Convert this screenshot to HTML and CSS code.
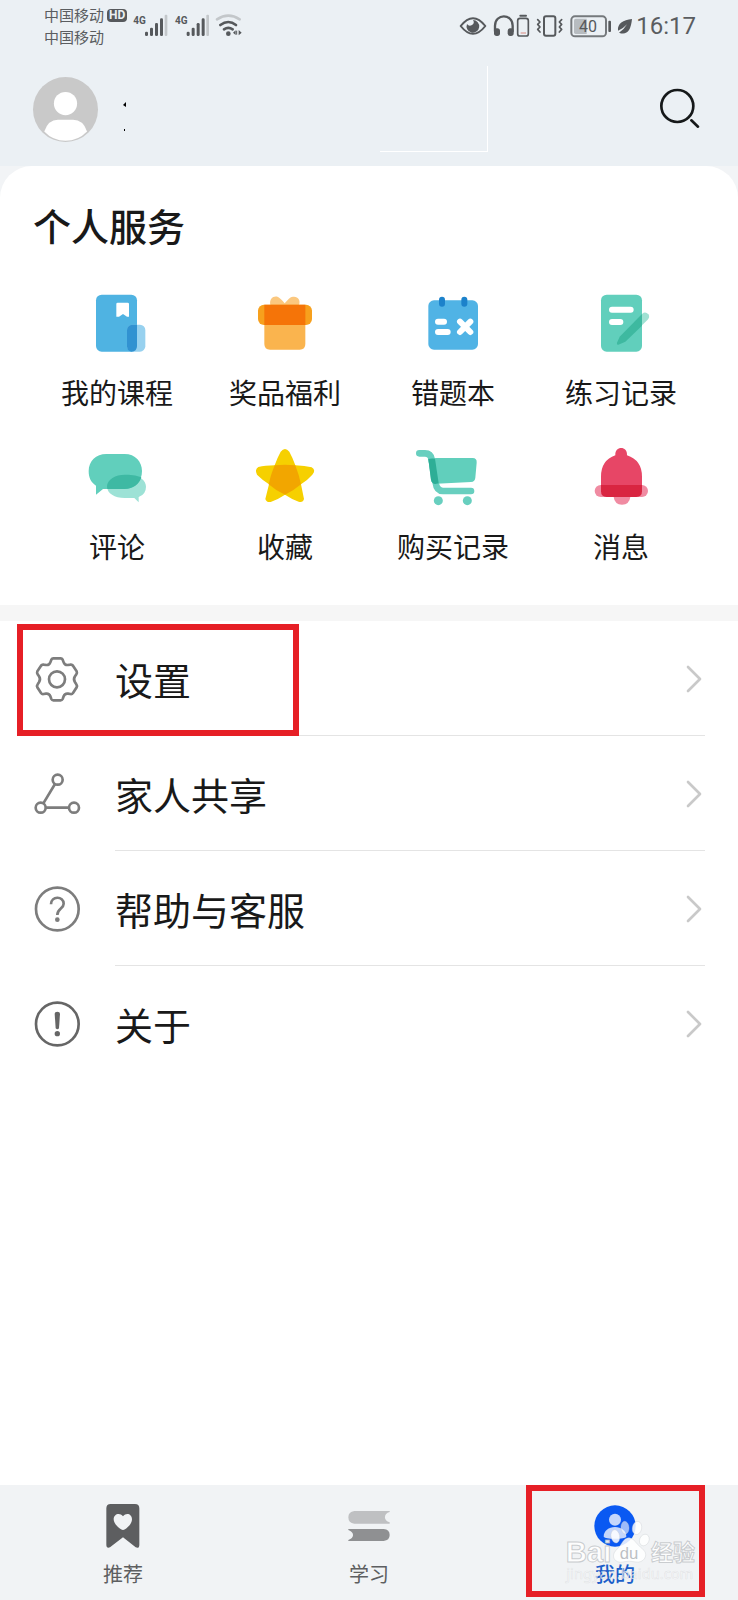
FILE: index.html
```html
<!DOCTYPE html>
<html lang="zh-CN">
<head>
<meta charset="utf-8">
<meta name="viewport" content="width=device-width, initial-scale=1">
<title>我的</title>
<link rel="stylesheet" href="styles.css">
</head>
<body>
<div class="page">
  <header class="header">
    <div class="status">
      <div class="carriers">
        <div class="carrier"><span>中国移动</span><span class="hd">HD</span></div>
        <div class="carrier"><span>中国移动</span></div>
      </div>
      <svg class="signals" viewBox="399 42 330 72" aria-hidden="true">
        <g fill="#56595c">
          <text class="net" x="400" y="73">4G</text>
          <text class="net" x="525" y="73">4G</text>
          <g id="bars">
            <rect x="435" y="95" width="9" height="13" rx="4"/>
            <rect x="450" y="83" width="9" height="25" rx="4"/>
            <rect x="465" y="69" width="9" height="39" rx="4"/>
            <rect x="480" y="55" width="9" height="53" rx="4"/>
            <rect x="494" y="44" width="8" height="64" rx="3" fill="#c3c7ca"/>
          </g>
          <use href="#bars" x="125"/>
          <circle cx="685" cy="101" r="7"/>
          <path d="M699 98l8-7v14zM725 98l-9-8v16z"/>
          <path d="M710 92v12" stroke="#56595c" stroke-width="3"/>
        </g>
        <g fill="none" stroke="#56595c" stroke-width="8" stroke-linecap="round">
          <path d="M651 58Q685 36 719 58" stroke="#c3c7ca"/>
          <path d="M661 75Q685 57 708 75"/>
          <path d="M672 88Q685 79 698 88"/>
        </g>
      </svg>
      <svg class="indicators" viewBox="60 40 528 72" aria-hidden="true">
        <g fill="none" stroke="#56595c" stroke-width="6" stroke-linecap="round" stroke-linejoin="round">
          <path d="M68 76Q105 29 142 76Q105 123 68 76Z"/>
          <path d="M171 92V75C171 38 224 38 224 75V92" stroke-width="7"/>
          <rect x="239" y="53" width="32" height="53" rx="7" stroke-width="5"/>
          <path d="M247 45h17"/>
          <rect x="318" y="47" width="34" height="58" rx="6"/>
          <path d="M299 57l7 7-7 7 7 8-7 7 7 8M371 57l-7 7 7 7-7 8 7 7-7 8" stroke-width="5"/>
          <rect x="400" y="47" width="104" height="60" rx="11" stroke="#75797c"/>
        </g>
        <path d="M248 97h16" stroke="#d98a80" stroke-width="3"/>
        <g fill="#56595c">
          <path d="M105 58a19 19 0 1 1-18 12a10 10 0 0 0 18-12Z"/>
          <rect x="168" y="83" width="18" height="23" rx="8"/>
          <rect x="209" y="83" width="18" height="23" rx="8"/>
          <rect x="511" y="60" width="8" height="34" rx="3"/>
          <path d="M582 55C555 58 538 68 540 90Q557 83 567 71Q558 87 543 96Q577 109 582 55Z"/>
        </g>
        <path d="M413 54h33v46h-33q-5 0-5-5V59q0-5 5-5Z" fill="#b7bcc0"/>
        <text class="battery" x="450" y="95" text-anchor="middle">40</text>
      </svg>
      <time class="clock">16:17</time>
    </div>
    <div class="profile">
      <svg class="avatar" viewBox="0 0 196 196" role="img" aria-label="头像">
        <circle cx="98" cy="98" r="98" fill="#c9c9c9"/>
        <circle cx="98" cy="80" r="35" fill="#fff"/>
        <path d="M34 164Q46 129 75 129H121Q151 129 163 164Q136 192 98 192T34 164Z" fill="#fff"/>
      </svg>
      <svg class="marks" viewBox="0 0 12 36" aria-hidden="true"><path d="M3 6l3-3v5z"/><path d="M4 30h1v2H4z"/></svg>
      <span class="patch"></span>
      <button class="search" type="button" aria-label="搜索">
        <svg viewBox="651 253 144 144" fill="none" stroke="#16191a" stroke-width="8" stroke-linecap="round"><circle cx="718" cy="316" r="48"/><path d="M760 359l20 19"/></svg>
      </button>
    </div>
  </header>

  <main class="main">
    <section class="services">
      <h1 class="title">个人服务</h1>
      <div class="grid">
        <a class="service" href="#">
          <svg viewBox="261 400 180 180" aria-hidden="true"><rect x="288" y="405" width="123" height="171" rx="17" fill="#4fb3e2"/><rect x="381" y="495" width="55" height="81" rx="16" fill="#97d1ef"/><path d="M397 495H411V559Q411 576 394 576Q381 574 381 560V511Q381 497 397 495Z" fill="#3192d1"/><path d="M353 429H383Q387 429 387 433V471H381L369 463L357 471H349V433Q349 429 353 429Z" fill="#fff"/></svg>
          <span>我的课程</span>
        </a>
        <a class="service" href="#">
          <svg viewBox="765 400 180 180" aria-hidden="true"><path d="M811 436C807 417 821 407 834 412Q840 414 854 431Q869 413 875 412C892 407 903 420 897 436Z" fill="#fbc87f"/><rect x="774" y="435" width="162" height="61" rx="18" fill="#f7a01d"/><path d="M793 496H916V553Q916 570 899 570H810Q793 570 793 553Z" fill="#fab44e"/><path d="M793 435H916V496H793Z" fill="#f57408"/></svg>
          <span>奖品福利</span>
        </a>
        <a class="service" href="#">
          <svg viewBox="165 70 180 180" aria-hidden="true"><rect x="181" y="92" width="149" height="148" rx="17" fill="#50b3e5"/><g fill="#1c82cb"><rect x="213" y="81" width="18" height="30" rx="9"/><rect x="280" y="81" width="18" height="30" rx="9"/></g><path d="M210 156H228M210 187H239M276 156L307 187M307 156L276 187" fill="none" stroke="#fff" stroke-width="18" stroke-linecap="round"/></svg>
          <span>错题本</span>
        </a>
        <a class="service" href="#">
          <svg viewBox="669 70 180 180" aria-hidden="true"><path d="M822 133Q832 124 841 134Q847 142 839 150L822 167Z" fill="#a0e1d3"/><rect x="699" y="75" width="123" height="171" rx="17" fill="#61cfbc"/><path d="M822 133V168L772 216L751 225Q745 226 747 219L755 201Z" fill="#3eb9a0"/><path d="M732 120H788M732 157H757" stroke="#fff" stroke-width="18" stroke-linecap="round"/></svg>
          <span>练习记录</span>
        </a>
        <a class="service" href="#">
          <svg viewBox="261 51 180 180" aria-hidden="true"><path d="M374 134H386C419 134 438 151 438 170Q438 193 416 201V217L403 204H374C344 204 321 191 321 169S344 134 374 134Z" fill="#9de2d6"/><path d="M319 72H374C406 72 426 95 426 123C426 154 405 177 373 177H309L288 194V167C272 156 266 143 266 123C266 94 288 72 319 72Z" fill="#61cfbc"/><path d="M374 134H386Q406 134 424 142C418 163 399 177 373 177H322Q321 173 321 169C321 148 347 134 374 134Z" fill="#3eb9a3"/></svg>
          <span>评论</span>
        </a>
        <a class="service" href="#">
          <svg viewBox="765 51 180 180" aria-hidden="true"><path d="M842 65Q855 49 868 65Q878 83 886 106Q915 107 935 112Q949 121 937 134Q925 148 903 163L912 207Q909 219 896 215Q874 207 855 194Q836 207 812 216Q799 218 796 207L807 163Q786 149 771 134Q763 119 775 111Q795 106 824 106Q832 83 842 65Z" fill="#f6d000"/><path d="M824 106Q855 103 886 106Q898 137 903 163Q880 183 855 194Q827 182 806 163Q812 134 824 106Z" fill="#f2a600"/></svg>
          <span>收藏</span>
        </a>
        <a class="service" href="#">
          <svg viewBox="165 51 180 180" aria-hidden="true"><path d="M154 70H171Q188 70 191 88L203 158Q206 183 225 183H309" fill="none" stroke="#68cfbf" stroke-width="20" stroke-linecap="round"/><path d="M181 87Q194 84 206 84H314Q327 84 326 98L322 143Q321 155 309 156L205 161Q191 162 189 149Z" fill="#61cfbc"/><path d="M181 87Q190 84 201 86L212 160L202 162Q191 161 189 149Z" fill="#2eae96"/><circle cx="211" cy="212" r="13.500" fill="#68cfbf"/><circle cx="298" cy="212" r="13.500" fill="#68cfbf"/></svg>
          <span>购买记录</span>
        </a>
        <a class="service" href="#">
          <svg viewBox="669 51 180 180" aria-hidden="true"><rect x="680" y="165" width="160" height="36" rx="18" fill="#f08ba2"/><path d="M737 201H787Q784 224 762 224T737 201Z" fill="#f08ba2"/><path d="M742 76C740 47 779 47 777 76Q822 91 822 140V165H699V140Q699 91 742 76Z" fill="#e74666"/><path d="M699 165H822V184Q822 201 805 201H716Q699 201 699 184Z" fill="#d92541"/></svg>
          <span>消息</span>
        </a>
      </div>
    </section>

    <nav class="menu" aria-label="更多">
      <a class="row" href="#">
        <svg class="row-icon" viewBox="99 164 144 144" aria-hidden="true"><path d="M160 174H182Q186 174 188 178L191 186Q194 195 204 194L211 193Q216 192 219 196L230 213Q232 218 229 222L225 228Q219 237 225 246L229 252Q232 256 230 261L219 278Q216 282 211 281L204 280Q194 279 191 288L188 296Q186 300 182 300H160Q156 300 154 296L151 288Q148 279 138 280L131 281Q126 282 123 278L112 261Q110 256 113 252L117 246Q123 237 117 228L113 222Q110 218 112 213L123 196Q126 192 131 193L138 194Q148 195 151 186L154 178Q156 174 160 174Z"/><circle cx="171" cy="237" r="24"/></svg>
        <span class="row-body"><span>设置</span><svg class="chevron" viewBox="258 165 48 84" aria-hidden="true"><path d="M264 171L300 207L264 243"/></svg></span>
      </a>
      <a class="row" href="#">
        <svg class="row-icon" viewBox="99 509 144 144" aria-hidden="true"><circle cx="173" cy="538" r="15"/><circle cx="122" cy="622" r="15"/><circle cx="222" cy="622" r="15"/><path d="M165 551L130 609M137 622H207"/></svg>
        <span class="row-body"><span>家人共享</span><svg class="chevron" viewBox="258 165 48 84" aria-hidden="true"><path d="M264 171L300 207L264 243"/></svg></span>
      </a>
      <a class="row" href="#">
        <svg class="row-icon" viewBox="99 104 144 144" aria-hidden="true"><circle cx="172" cy="176" r="64"/><path d="M153 162C153 136 191 136 191 160C191 175 172 174 172 194"/><circle class="dot" cx="172" cy="208" r="7"/></svg>
        <span class="row-body"><span>帮助与客服</span><svg class="chevron" viewBox="258 165 48 84" aria-hidden="true"><path d="M264 171L300 207L264 243"/></svg></span>
      </a>
      <a class="row" href="#">
        <svg class="row-icon dark" viewBox="99 449 144 144" aria-hidden="true"><circle cx="172" cy="521" r="64"/><path class="dot" d="M164 490Q164 484 172 484T180 490L177 534Q172 540 167 534Z"/><circle class="dot" cx="172" cy="550" r="8"/></svg>
        <span class="row-body"><span>关于</span><svg class="chevron" viewBox="258 165 48 84" aria-hidden="true"><path d="M264 171L300 207L264 243"/></svg></span>
      </a>
      <span class="frame frame-settings"></span>
    </nav>
  </main>

  <nav class="tabs" aria-label="主导航">
    <a class="tab" href="#">
      <svg class="tab-icon" viewBox="117 96 144 144" aria-hidden="true"><path d="M152 102H225Q238 102 238 115V224Q238 237 227 232L189 202L150 232Q139 236 139 224V115Q139 102 152 102Z" fill="#5d5e60"/><path d="M189 139C179 126 161 132 161 148C161 160 173 171 183 178Q189 182 195 178C206 170 216 160 216 148C216 132 199 126 189 139Z" fill="#f1f3f5"/></svg>
      <span>推荐</span>
    </a>
    <a class="tab" href="#">
      <svg class="tab-icon" viewBox="855 96 144 144" aria-hidden="true"><path d="M883 123H989V126C970 131 970 152 989 157V161H883Q865 159 865 142T883 123Z" fill="#bfc0c2"/><path d="M865 177H971Q989 179 989 195T971 213H865V210C884 204 884 186 865 180Z" fill="#8f9092"/></svg>
      <span>学习</span>
    </a>
    <a class="tab active" href="#" aria-current="page">
      <svg class="tab-icon" viewBox="273 96 144 144" aria-hidden="true"><circle cx="345" cy="168" r="62" fill="#0a59f2"/><circle cx="345" cy="149" r="18" fill="#c5d6fb"/><path d="M311 200C311 183 326 171 345 171S379 183 379 200Q374 206 345 206T311 200Z" fill="#c5d6fb"/></svg>
      <span>我的</span>
      <svg class="watermark" viewBox="190 140 420 210" aria-hidden="true">
        <g fill="#fff" fill-opacity="0.85" stroke="#c4c8cc" stroke-opacity="0.5" stroke-width="2">
          <ellipse cx="376" cy="172" rx="12" ry="19" transform="rotate(-4 376 172)" fill-opacity="0.6"/>
          <ellipse cx="412" cy="173" rx="14" ry="20" transform="rotate(10 412 173)"/>
          <ellipse cx="347" cy="198" rx="13" ry="20" transform="rotate(-10 347 198)"/>
          <ellipse cx="434" cy="209" rx="14" ry="18" transform="rotate(24 434 209)"/>
          <path d="M388 202Q401 203 412 220Q422 231 433 240C447 257 430 279 409 275Q388 270 369 275C345 280 333 257 348 241Q361 229 369 214Q377 202 388 202Z"/>
        </g>
        <text class="mark" x="198" y="274">Bai</text>
        <text class="mark-du" x="360" y="266">du</text>
        <text class="mark-cn" x="454" y="270">经验</text>
        <text class="mark-url" x="200" y="327">jingyan.baidu.com</text>
      </svg>
      <span class="frame frame-mine"></span>
    </a>
  </nav>
</div>
</body>
</html>
```
FILE: styles.css
```css
* { box-sizing: border-box; }

body {
  margin: 0;
  background: #fff;
  color: #191919;
  font-family: "Noto Sans CJK SC", "Noto Sans", sans-serif;
}

a { color: inherit; text-decoration: none; }
svg { display: block; flex: none; overflow: visible; }

.page {
  display: flex;
  flex-direction: column;
  min-height: 100vh;
}

.header { background: #ebf0f4; }

.status {
  display: flex;
  align-items: center;
  height: 52px;
  padding: 0 42px 0 44px;
  color: #5a5d60;
}

.carriers { font-size: 15px; line-height: 22px; }

.carrier {
  display: flex;
  align-items: center;
  gap: 3px;
}

.hd {
  padding: 0 2px;
  border-radius: 4px;
  background: #56595c;
  color: #ebf0f4;
  font: 700 12px/13px Roboto, sans-serif;
}

.signals { width: 110px; height: 24px; margin-left: 6px; }
.net { font: 700 30px Roboto, sans-serif; }
.indicators { width: 176px; height: 24px; margin-left: auto; }
.battery { font: 400 48px Roboto, sans-serif; fill: #56595c; }

.clock {
  margin-left: 2px;
  font: 400 24px/28px Roboto, sans-serif;
}

.profile {
  display: flex;
  align-items: center;
  height: 114px;
  padding: 0 35px 0 33px;
}

.avatar { width: 65px; height: 65px; }

.marks { width: 12px; height: 36px; margin-top: 16px; margin-left: 22px; }

.patch {
  width: 108px;
  height: 86px;
  margin-left: 248px;
  border-right: 1px solid #fff;
  border-bottom: 1px solid #fff;
}

.search {
  margin-left: auto;
  padding: 0;
  border: 0;
  background: none;
}

.search svg { width: 48px; height: 48px; }

.main { background: #f2f4f6; }

.services {
  padding: 35px 33px 39px;
  border-radius: 32px 32px 0 0;
  background: #fff;
}

.title {
  margin: 0 0 44px;
  font-size: 38px;
  font-weight: 500;
  line-height: 48px;
}

.grid {
  display: grid;
  grid-template-columns: repeat(4, 1fr);
  row-gap: 35px;
}

.service {
  display: flex;
  flex-direction: column;
  align-items: center;
  gap: 19px;
  font-size: 28px;
  line-height: 40px;
}

.service svg { width: 60px; height: 60px; }

.menu {
  position: relative;
  border-top: 16px solid #f6f6f6;
  background: #fff;
}

.row {
  display: flex;
  align-items: center;
  gap: 34px;
  padding: 0 33px;
}

.row-icon {
  width: 48px;
  height: 48px;
  fill: none;
  stroke: #7d7d7d;
  stroke-width: 8;
}

.row-icon .dot { fill: #7d7d7d; stroke: none; }
.row-icon.dark { stroke: #666; }
.row-icon.dark .dot { fill: #666; }

.row-body {
  display: flex;
  flex: 1;
  align-items: center;
  justify-content: space-between;
  height: 115px;
  padding: 2px 3px 0 0;
  border-bottom: 1px solid #e4e4e4;
  font-size: 38px;
  line-height: 48px;
}

.row:nth-child(4) .row-body { border-color: transparent; }

.chevron {
  width: 16px;
  height: 28px;
  fill: none;
  stroke: #c9c9c9;
  stroke-width: 8;
  stroke-linecap: round;
  stroke-linejoin: round;
}

.frame {
  position: absolute;
  border: 6px solid #e61f26;
  pointer-events: none;
}

.frame-settings { top: 3px; left: 17px; width: 282px; height: 112px; }
.frame-mine { top: 0; right: 33px; bottom: 3px; left: 34px; }

.tabs {
  display: grid;
  grid-template-columns: repeat(3, 1fr);
  margin-top: auto;
  background: #f1f3f5;
}

.tab {
  position: relative;
  display: flex;
  flex-direction: column;
  align-items: center;
  gap: 10px;
  padding: 17px 0 12px;
  color: #5d5e60;
  font-size: 20px;
  line-height: 28px;
}

.tab.active { color: #1c5fc9; font-weight: 500; }
.tab-icon { width: 48px; height: 48px; }

.watermark {
  position: absolute;
  top: 32px;
  right: 35px;
  width: 140px;
  height: 70px;
}

.mark, .mark-du, .mark-cn, .mark-url {
  fill: #fff;
  fill-opacity: 0.9;
  stroke: #b4b8bc;
  stroke-opacity: 0.7;
  stroke-width: 3;
}

.mark { font: 700 88px "Liberation Sans", sans-serif; }
.mark-du { font: 400 50px "Liberation Sans", sans-serif; fill: #b4b8bc; stroke: none; }
.mark-cn { font: 700 66px "Noto Sans CJK SC", sans-serif; }
.mark-url { font: 400 44px "Noto Sans", sans-serif; fill-opacity: 0.7; stroke-opacity: 0.3; stroke-width: 2; }
```
